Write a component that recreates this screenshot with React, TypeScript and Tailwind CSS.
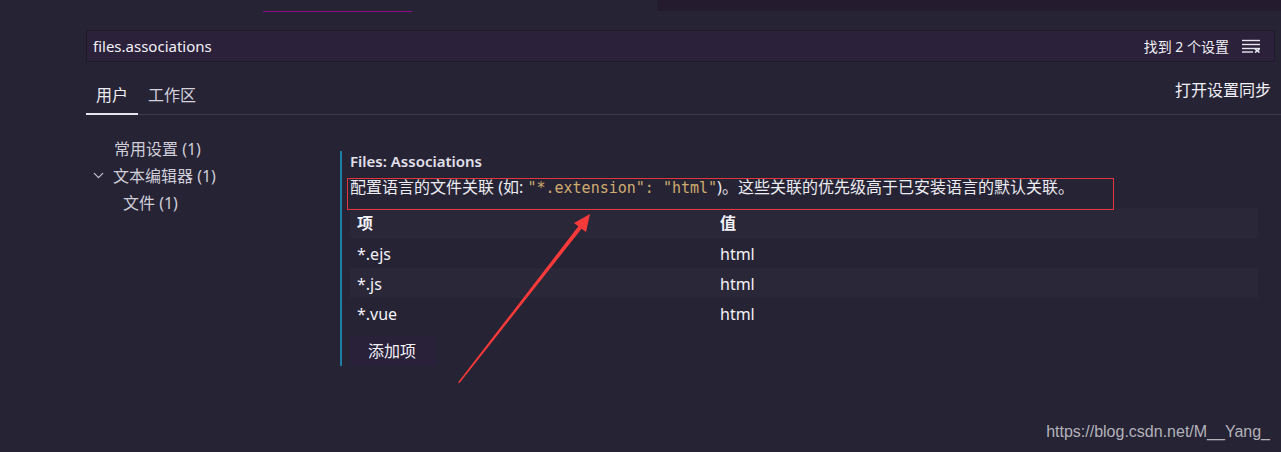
import { ChevronDown } from "lucide-react";

const ROWS = [
  { key: "*.ejs", value: "html" },
  { key: "*.js", value: "html" },
  { key: "*.vue", value: "html" },
];

function ClearFilterIcon() {
  return (
    <svg width="20" height="14" viewBox="0 0 20 14" fill="none" stroke="#e8e6f0" strokeWidth="1.4">
      <path d="M1 1.5h18" />
      <path d="M1 5.5h18" />
      <path d="M1 9.5h18" />
      <path d="M1 13h11" />
      <path d="M14 9.8l4.5 3.7M18.5 9.8L14 13.5" strokeWidth="1.6" />
    </svg>
  );
}

export default function App() {
  return (
    <div className="relative h-[452px] w-full overflow-hidden bg-[#262335] font-['Noto_Sans','Noto_Sans_CJK_SC',sans-serif] text-[#e6e4ee]">
      {/* top strip */}
      <div className="flex h-[12px]">
        <div className="w-[263px]" />
        <div className="w-[149px] border-b border-[#8e0c92]" />
        <div className="flex-1" />
        <div className="h-[11px] w-[624px] bg-[#241b2f]" />
      </div>

      {/* search */}
      <div className="ml-[86px] mr-[6px] mt-[18px] flex h-[32px] items-center justify-between border border-[#1f1a2a] bg-[#2b213a] pl-[6px] pr-[13px]">
        <span className="text-[15px] text-[#f2f0f7]">files.associations</span>
        <div className="flex items-center gap-[12px]">
          <span className="text-[14px] text-[#f2f0f7]">找到 2 个设置</span>
          <ClearFilterIcon />
        </div>
      </div>

      {/* tabs */}
      <div className="ml-[86px] mt-[16px] flex items-end justify-between border-b border-[#3d3a4b]">
        <div className="flex">
          <div className="-mb-px border-b-2 border-[#e6e4ee] px-[10px] pb-[6px] text-[16px] text-[#ececf2]">用户</div>
          <div className="px-[10px] pb-[6px] text-[16px] text-[#d4d2dc]">工作区</div>
        </div>
        <div className="mb-[12px] pr-[10px] text-[16px] text-[#f2f0f7]">打开设置同步</div>
      </div>

      {/* body */}
      <div className="ml-[86px] mr-[23px] flex">
        <div className="w-[254px] pt-[20px] text-[16px] text-[#cfcdd8]">
          <div className="flex h-[27px] items-center pl-[28px]">常用设置 (1)</div>
          <div className="flex h-[27px] items-center pl-[4px]">
            <ChevronDown size={17} strokeWidth={1.6} className="mr-[6px] text-[#cfcdd8]" />
            文本编辑器 (1)
          </div>
          <div className="flex h-[27px] items-center pl-[37px]">文件 (1)</div>
        </div>

        <div className="mt-[36px] flex-1 border-l-2 border-[#1d7ea6] pl-[8px]">
          <div className="h-[20px] text-[15px] font-semibold leading-[20px] text-[#e2e0ea]">Files: Associations</div>
          <div className="mt-[3px] h-[26px] text-[16px] leading-[26px] text-[#ececf2]">
            配置语言的文件关联 (如: <span className="font-['DejaVu_Sans_Mono',monospace] text-[15px] text-[#cfac6e]">"*.extension": "html"</span>)。这些关联的优先级高于已安装语言的默认关联。
          </div>
          <div className="mt-[8px] text-[16px] text-[#f4f2f8]">
            <div className="flex h-[30px] items-center bg-[#2a2739] font-bold">
              <div className="w-[370px] pl-[7px]">项</div>
              <div>值</div>
            </div>
            {ROWS.map((row, i) => (
              <div key={row.key} className={`flex h-[30px] items-center pt-[2px] ${i % 2 === 1 ? "bg-[#2a2739]" : ""}`}>
                <div className="w-[370px] pl-[7px]">{row.key}</div>
                <div>{row.value}</div>
              </div>
            ))}
          </div>
          <div className="mt-[8px] flex h-[30px] w-[87px] items-center bg-[#29203a] pl-[18px] text-[16px] text-[#f2f0f7]">
            添加项
          </div>
        </div>
      </div>

      {/* annotation */}
      <div className="absolute left-[347px] top-[178px] h-[32px] w-[767px] border border-[#e0363b]" />
      <svg className="absolute left-0 top-0" width="1281" height="452">
        <polygon points="458,382.5 459.5,383 581.6,228.7 586,232 590,214 574,223 578.4,226.3" fill="#f83a3a" />
      </svg>
      <div className="absolute bottom-[8px] right-[11px] font-['Liberation_Sans',sans-serif] text-[16px] text-[#b3b2ba]">
        https://blog.csdn.net/M__Yang_
      </div>
    </div>
  );
}
